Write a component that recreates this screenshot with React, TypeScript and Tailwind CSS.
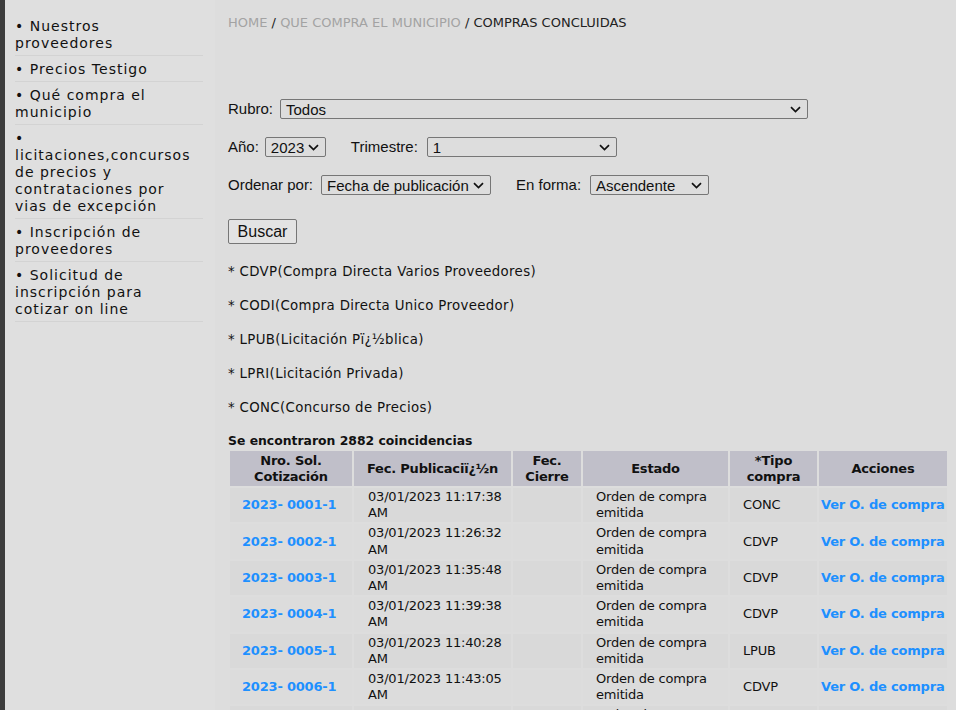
import React from "react";

const menu: React.ReactNode[] = [
  <>• Nuestros<br />proveedores</>,
  <>• Precios Testigo</>,
  <>• Qué compra el<br />municipio</>,
  <>•<br />licitaciones,concursos<br />de precios y<br />contrataciones por<br />vias de excepción</>,
  <>• Inscripción de<br />proveedores</>,
  <>• Solicitud de<br />inscripción para<br />cotizar on line</>,
];

const rows = [
  ["2023- 0001-1", "11:17:38", "CONC"],
  ["2023- 0002-1", "11:26:32", "CDVP"],
  ["2023- 0003-1", "11:35:48", "CDVP"],
  ["2023- 0004-1", "11:39:38", "CDVP"],
  ["2023- 0005-1", "11:40:28", "LPUB"],
  ["2023- 0006-1", "11:43:05", "CDVP"],
  ["2023- 0007-1", "11:45:12", "CDVP"],
  ["2023- 0008-1", "11:52:40", "CODI"],
];

function Chevron() {
  return (
    <svg width="11" height="7" viewBox="0 0 11 7" className="shrink-0">
      <path d="M1 1.2l4.5 4.3 4.5-4.3" fill="none" stroke="#111" strokeWidth="1.7" />
    </svg>
  );
}

function FakeSelect({ value, w }: { value: string; w: string }) {
  return (
    <div
      className={`${w} h-[20px] flex items-center justify-between border border-[#767676] rounded-[2px] pl-[5px] pr-[6px] text-[15px] text-[#111] font-['Liberation_Sans',Arial,sans-serif] leading-none`}
    >
      <span className="whitespace-nowrap">{value}</span>
      <Chevron />
    </div>
  );
}

export default function App() {
  return (
    <div className="flex min-h-[710px] w-[956px] bg-[#dddddd] text-[#111]">
      <aside className="w-[215px] shrink-0 flex">
        <div className="w-[5px] bg-[#3d3d3d]" />
        <div className="flex-1 bg-[#dfdfdf] pl-[10px] pr-[12px] pt-[13px]">
          <ul className="font-['DejaVu_Sans',Verdana,sans-serif] text-[14px] leading-[17px] tracking-[1px] text-[#111]">
            {menu.map((m, i) => (
              <li key={i} className="border-b border-[#d3d3d3] pt-[5px] pb-[3px] whitespace-nowrap">
                {m}
              </li>
            ))}
          </ul>
        </div>
      </aside>

      <main className="flex-1 pl-[13px] pt-[14px] font-['DejaVu_Sans',Verdana,sans-serif]">
        <div className="mt-[1px] text-[13px] leading-[16px]">
          <span className="text-[#a3a3a3]">HOME</span> <span className="text-[#222]">/</span>{" "}
          <span className="text-[#a3a3a3]">QUE COMPRA EL MUNICIPIO</span>{" "}
          <span className="text-[#222]">/ COMPRAS CONCLUIDAS</span>
        </div>

        <div className="mt-[68px] font-['Liberation_Sans',Arial,sans-serif] text-[15px] text-[#111]">
          <div className="flex items-center h-[20px]">
            <span className="mr-[7px]">Rubro:</span>
            <FakeSelect value="Todos" w="w-[528px]" />
          </div>
          <div className="flex items-center h-[20px] mt-[18px]">
            <span className="mr-[6px]">Año:</span>
            <FakeSelect value="2023" w="w-[61px]" />
            <span className="ml-[25px] mr-[9px]">Trimestre:</span>
            <FakeSelect value="1" w="w-[190px]" />
          </div>
          <div className="flex items-center h-[20px] mt-[18px]">
            <span className="mr-[8px]">Ordenar por:</span>
            <FakeSelect value="Fecha de publicación" w="w-[170px]" />
            <span className="ml-[25px] mr-[9px]">En forma:</span>
            <FakeSelect value="Ascendente" w="w-[119px]" />
          </div>
          <button className="mt-[24px] w-[69px] h-[25px] border border-[#767676] rounded-[2px] bg-[#e3e3e3] text-[16px] leading-none text-[#111] block">
            Buscar
          </button>
        </div>

        <div className="mt-[20px] text-[13.33px] leading-[16px] tracking-[0.34px] text-[#111]">
          <p>* CDVP(Compra Directa Varios Proveedores)</p>
          <p className="mt-[18px]">* CODI(Compra Directa Unico Proveedor)</p>
          <p className="mt-[18px]">* LPUB(Licitación Pï¿½blica)</p>
          <p className="mt-[18px]">* LPRI(Licitación Privada)</p>
          <p className="mt-[18px]">* CONC(Concurso de Precios)</p>
          <p className="mt-[17px] font-bold text-[12.4px] tracking-normal">Se encontraron 2882 coincidencias</p>
        </div>

        <table className="border-separate border-spacing-[2px] table-fixed w-[721px] text-[13px] tracking-[-0.2px] text-[#111]">
          <thead>
            <tr className="bg-[#c0bfc9] font-bold leading-[16px] text-center">
              <th className="w-[122px] py-[1.5px] font-bold">Nro. Sol.<br />Cotización</th>
              <th className="w-[157px] py-[1.5px] font-bold">Fec. Publicaciï¿½n</th>
              <th className="w-[68px] py-[1.5px] font-bold">Fec.<br />Cierre</th>
              <th className="w-[145px] py-[1.5px] font-bold">Estado</th>
              <th className="w-[87px] py-[1.5px] font-bold">*Tipo<br />compra</th>
              <th className="w-[128px] py-[1.5px] font-bold">Acciones</th>
            </tr>
          </thead>
          <tbody>
            {rows.map((r, i) => (
              <tr key={r[0]} className={`leading-[16.2px] ${i % 2 === 0 ? "bg-[#d9d9d9]" : "bg-[#dcdcdc]"}`}>
                <td className="py-px pl-[12px] font-bold text-[#1e90ff] whitespace-nowrap">{r[0]}</td>
                <td className="py-px pl-[14px] whitespace-nowrap">03/01/2023 {r[1]}<br />AM</td>
                <td className="py-px"></td>
                <td className="py-px pl-[13px]">Orden de compra<br />emitida</td>
                <td className="py-px pl-[13px]">{r[2]}</td>
                <td className="py-px pl-[2px] font-bold text-[#1e90ff] whitespace-nowrap">Ver O. de compra</td>
              </tr>
            ))}
          </tbody>
        </table>
      </main>
    </div>
  );
}
